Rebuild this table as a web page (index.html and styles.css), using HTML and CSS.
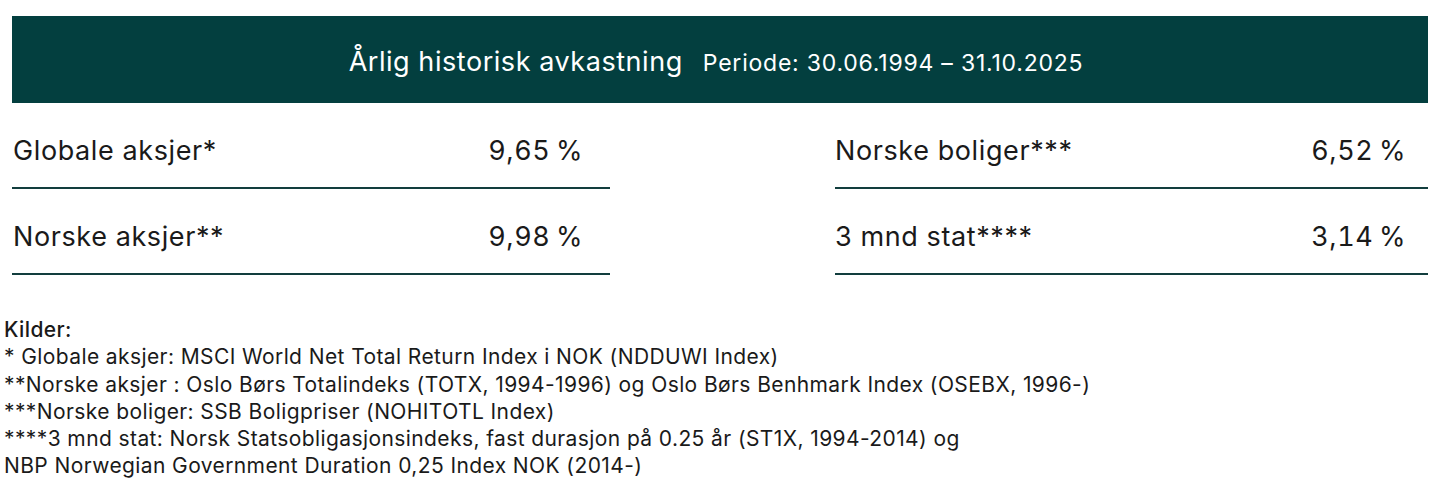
FILE: index.html
```html
<!DOCTYPE html>
<html lang="no">
<head>
<meta charset="utf-8">
<title>Årlig historisk avkastning</title>
<link rel="stylesheet" href="styles.css">
</head>
<body>
<div class="page">
  <header class="banner">
    <h1 class="banner-title">Årlig historisk avkastning</h1>
    <span class="banner-period">Periode: 30.06.1994 – 31.10.2025</span>
  </header>
  <section class="grid">
    <div class="col col-left">
      <div class="row"><span class="label">Globale aksjer*</span><span class="value">9,65&#8201;%</span></div>
      <div class="row"><span class="label">Norske aksjer**</span><span class="value">9,98&#8201;%</span></div>
    </div>
    <div class="col col-right">
      <div class="row"><span class="label">Norske boliger***</span><span class="value">6,52&#8201;%</span></div>
      <div class="row"><span class="label">3 mnd stat****</span><span class="value">3,14&#8201;%</span></div>
    </div>
  </section>
  <footer class="notes">
    <div class="notes-title">Kilder:</div>
    <div>* Globale aksjer: MSCI World Net Total Return Index i NOK (NDDUWI Index)</div>
    <div>**Norske aksjer : Oslo Børs Totalindeks (TOTX, 1994-1996) og Oslo Børs Benhmark Index (OSEBX, 1996-)</div>
    <div>***Norske boliger: SSB Boligpriser (NOHITOTL Index)</div>
    <div>****3 mnd stat: Norsk Statsobligasjonsindeks, fast durasjon på 0.25 år (ST1X, 1994-2014) og</div>
    <div>NBP Norwegian Government Duration 0,25 Index NOK (2014-)</div>
  </footer>
</div>
</body>
</html>
```
FILE: styles.css
```css
* { box-sizing: border-box; }
html, body { margin: 0; padding: 0; background: #ffffff; }
body {
  font-family: Inter, "Liberation Sans", sans-serif;
  color: #1a1a1a;
}
.page {
  padding-top: 16px;
}
.banner {
  margin-left: 12px;
  width: 1416px;
  height: 87px;
  background: #033f3f;
  color: #ffffff;
  display: flex;
  align-items: center;
  justify-content: center;
  gap: 20px;
  padding-top: 4px;
  padding-right: 8px;
}
.banner-title {
  margin: 0;
  font-size: 27px;
  font-weight: 400;
  letter-spacing: 0.55px;
}
.banner-period {
  font-size: 23px;
  letter-spacing: 0.78px;
  padding-top: 3px;
}
.grid {
  margin-left: 12px;
  width: 1416px;
  display: grid;
  grid-template-columns: 598px 1fr;
  column-gap: 225px;
}
.row {
  display: flex;
  justify-content: space-between;
  align-items: center;
  height: 86px;
  padding-top: 32px;
  padding-bottom: 22px;
  border-bottom: 2px solid #123e3e;
  font-size: 27px;
  letter-spacing: 0.6px;
}
.value {
  font-variant-numeric: tabular-nums;
}
.col-left .row { padding-right: 27px; padding-left: 1px; }
.col-right .row { padding-right: 22px; }
.notes {
  margin-top: 41px;
  padding-left: 4px;
  font-size: 21px;
  line-height: 27.3px;
  letter-spacing: 0.4px;
}
.notes-title {
  font-weight: 500;
}
```
